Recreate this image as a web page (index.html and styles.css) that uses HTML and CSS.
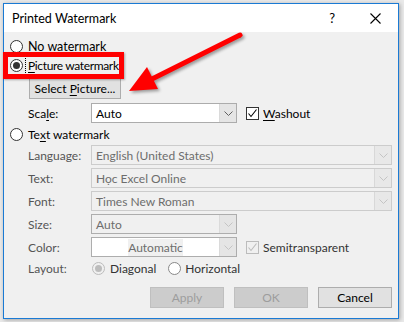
FILE: index.html
```html
<!DOCTYPE html>
<html>
<head>
<meta charset="utf-8">
<link rel="stylesheet" href="styles.css">
</head>
<body>
<div class="window">
  <div class="titlebar">
    <span class="title">Printed Watermark</span>
    <span class="help">?</span>
    <span class="close"><svg width="11" height="11" viewBox="0 0 11 11"><path d="M0.5 0.5 L10.5 10.5 M10.5 0.5 L0.5 10.5" stroke="#000" stroke-width="1.1" fill="none"/></svg></span>
  </div>
  <div class="content">
    <div class="radio-row r-none"><span class="radio"></span><span>No watermark</span></div>
    <div class="radio-row r-pic"><span class="radio checked"></span><span class="focus"><u>P</u>icture watermark</span></div>
    <div class="btn-row"><span class="btn select"><span>Select <u>P</u>icture...</span></span></div>
    <div class="field-row r-scale">
      <span class="label">Sca<u>l</u>e:</span>
      <div class="combo short"><span class="val">Auto</span><span class="arrow"><svg width="9" height="5" viewBox="0 0 9 5"><path d="M0.5 0.5 L4.5 4.5 L8.5 0.5" stroke="#606060" fill="none"/></svg></span></div>
      <span class="check"><svg width="11" height="11" viewBox="0 0 11 11"><path d="M1.5 5.5 L4 8.5 L9.5 1.5" stroke="#000" stroke-width="1.1" fill="none"/></svg></span>
      <span class="check-label"><u>W</u>ashout</span>
    </div>
    <div class="radio-row r-text"><span class="radio"></span><span>Te<u>x</u>t watermark</span></div>
    <div class="field-row dis r-lang">
      <span class="label">Language:</span>
      <div class="combo long"><span class="val">English (United States)</span><span class="arrow"><svg width="9" height="5" viewBox="0 0 9 5"><path d="M0.5 0.5 L4.5 4.5 L8.5 0.5" stroke="#c4c4c4" fill="none"/></svg></span></div>
    </div>
    <div class="field-row dis r-gap">
      <span class="label">Text:</span>
      <div class="combo long"><span class="val">Học Excel Online</span><span class="arrow"><svg width="9" height="5" viewBox="0 0 9 5"><path d="M0.5 0.5 L4.5 4.5 L8.5 0.5" stroke="#c4c4c4" fill="none"/></svg></span></div>
    </div>
    <div class="field-row dis r-gap">
      <span class="label">Font:</span>
      <div class="combo long"><span class="val">Times New Roman</span><span class="arrow"><svg width="9" height="5" viewBox="0 0 9 5"><path d="M0.5 0.5 L4.5 4.5 L8.5 0.5" stroke="#c4c4c4" fill="none"/></svg></span></div>
    </div>
    <div class="field-row dis r-gap">
      <span class="label">Size:</span>
      <div class="combo short mid"><span class="val">Auto</span><span class="arrow"><svg width="9" height="5" viewBox="0 0 9 5"><path d="M0.5 0.5 L4.5 4.5 L8.5 0.5" stroke="#c4c4c4" fill="none"/></svg></span></div>
    </div>
    <div class="field-row dis r-gap">
      <span class="label">Color:</span>
      <div class="combo short mid white"><span class="val center"><span class="hl">Automatic</span></span><span class="arrow"><svg width="9" height="5" viewBox="0 0 9 5"><path d="M0.5 0.5 L4.5 4.5 L8.5 0.5" stroke="#c4c4c4" fill="none"/></svg></span></div>
      <span class="check dis-check"><svg width="11" height="11" viewBox="0 0 11 11"><path d="M1.5 5.5 L4 8.5 L9.5 1.5" stroke="#bcbcbc" stroke-width="1.1" fill="none"/></svg></span>
      <span class="check-label grey">Semitransparent</span>
    </div>
    <div class="field-row dis r-layout">
      <span class="label">Layout:</span>
      <span class="radio dis-radio checked-dis"></span><span class="opt">Diagonal</span>
      <span class="radio dis-radio2"></span><span class="opt">Horizontal</span>
    </div>
    <div class="buttons">
      <span class="btn dlg disabled">Apply</span>
      <span class="btn dlg disabled">OK</span>
      <span class="btn dlg">Cancel</span>
    </div>
  </div>
</div>
<div class="annot-box"></div>
<svg class="annot-arrow" width="404" height="322" viewBox="0 0 404 322">
  <line x1="240" y1="35" x2="152" y2="79" stroke="#ff0000" stroke-width="5" stroke-linecap="round"/>
  <polygon points="129,91 147,67 158,89" fill="#ff0000"/>
</svg>
</body>
</html>
```
FILE: styles.css
```css
* { box-sizing: border-box; }
html, body { margin: 0; padding: 0; }
body {
  width: 404px;
  height: 322px;
  background: #e9e9e9;
  font-family: Lato, "Liberation Sans", sans-serif;
  font-size: 12px;
  color: #000;
  position: relative;
  overflow: hidden;
}
u { text-decoration: underline; text-underline-offset: 2px; }

.window {
  margin: 3px 0 0 3px;
  width: 396px;
  height: 316px;
  border: 1px solid #1a7ad4;
  background: #f0f0f0;
  display: flex;
  flex-direction: column;
  box-shadow: 1px 1px 4px rgba(0,0,0,0.3);
}
.titlebar {
  flex: none;
  height: 28px;
  background: #fff;
  display: flex;
  align-items: center;
  padding-left: 8px;
}
.title { flex: 1; font-size: 12.5px; }
.help { font-size: 13px; margin-right: 35px; }
.close { display: flex; margin-right: 17px; }

.content {
  flex: 1;
  display: flex;
  flex-direction: column;
  padding-left: 6px;
}
.radio-row {
  display: flex;
  align-items: center;
  height: 19px;
}
.r-none { margin-top: 5px; font-size: 12.5px; }
.radio {
  width: 13px;
  height: 13px;
  border: 1px solid #333;
  border-radius: 50%;
  background: #fff;
  margin-right: 5px;
  display: flex;
  align-items: center;
  justify-content: center;
  flex: none;
}
.radio.checked::after {
  content: "";
  width: 7px;
  height: 7px;
  border-radius: 50%;
  background: #333;
}
.focus {
  outline: 1px dotted #000;
  padding: 1px 1px 1px 2px;
  margin-left: -2px;
  letter-spacing: -0.35px;
}
.btn-row { display: flex; margin-top: 3px; }
.btn {
  display: flex;
  align-items: center;
  justify-content: center;
  height: 21px;
  background: #e1e1e1;
  border: 1px solid #adadad;
  color: #000;
}
.select { margin-left: 19px; width: 92px; }

.field-row {
  display: flex;
  align-items: center;
  height: 20px;
  padding-left: 18px;
}
.r-scale { margin-top: 4px; }
.r-text { margin-top: 2px; }
.r-lang { margin-top: 1px; }
.r-gap { margin-top: 3px; }
.r-layout { margin-top: 1px; }
.label { width: 63px; flex: none; }
.dis .label { color: #555; }

.combo {
  height: 20px;
  border: 1px solid #acacac;
  background: #fff;
  display: flex;
  align-items: stretch;
  flex: none;
}
.combo.short { width: 146px; }
.combo.long { width: 301px; border-color: #cccccc; background: #f0f0f0; }
.combo.mid { border-color: #adadad; background: #f0f0f0; }
.combo.mid.white { background: #fff; }
.val {
  flex: 1;
  display: flex;
  align-items: center;
  padding-left: 4px;
}
.dis .val { color: #6d6d6d; }
.val.center { justify-content: center; padding-left: 0; }
.hl { background: #f0f0f0; color: #6d6d6d; padding: 1px 0; }
.arrow {
  width: 17px;
  flex: none;
  display: flex;
  align-items: center;
  justify-content: center;
  background: #e5e5e5;
  border-left: 1px solid #dadada;
}
.long .arrow { background: #e8e8e8; border-left: 1px solid #d8d8d8; }

.check {
  width: 13px;
  height: 13px;
  border: 1px solid #333;
  background: #fff;
  margin-left: 9px;
  margin-right: 4px;
  display: flex;
  align-items: center;
  justify-content: center;
  flex: none;
}
.dis-check { border-color: #bcbcbc; background: #f0f0f0; }
.check-label.grey { color: #333; }

.dis-radio { border-color: #bcbcbc; background: #f0f0f0; margin-right: 5px; margin-left: 1px; }
.dis-radio.checked-dis::after {
  content: "";
  width: 7px;
  height: 7px;
  border-radius: 50%;
  background: #bcbcbc;
}
.dis-radio2 { border-color: #888; margin-left: 12px; margin-right: 4px; }
.opt { color: #333; }

.buttons {
  display: flex;
  justify-content: flex-end;
  gap: 10px;
  margin-top: 9px;
  padding-right: 6px;
}
.dlg { width: 74px; }
.disabled { background: #cccccc; border-color: #bfbfbf; color: #9d9d9d; }

.annot-box {
  position: absolute;
  left: 3px;
  top: 52px;
  width: 121px;
  height: 27px;
  border: 5px solid #ff0000;
  box-shadow: 1px 1px 2px rgba(0,0,0,0.3);
}
.annot-arrow {
  position: absolute;
  left: 0;
  top: 0;
  filter: drop-shadow(2px 2px 1.5px rgba(0,0,0,0.35));
  pointer-events: none;
}
```
